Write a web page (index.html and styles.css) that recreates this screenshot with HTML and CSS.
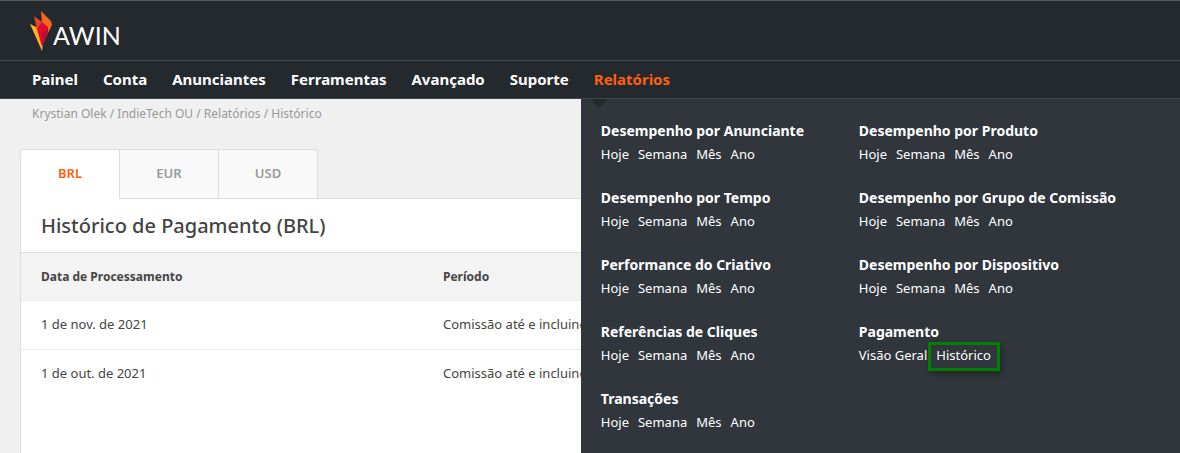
FILE: index.html
```html
<!DOCTYPE html>
<html lang="pt">
<head>
    <meta charset="UTF-8">
    <meta name="viewport" content="width=device-width, initial-scale=1.0">
    <title>Histórico de Pagamento</title>
    <link rel="stylesheet" href="styles.css">
</head>
<body>
    <header>
        <a href="#" class="logo">
            <svg width="23" height="41" viewBox="0 0 23 41" aria-hidden="true">
                <path fill="#f06a1d" d="M11 1 L21 11 L22 15 L16 27 L12 13 Z"/>
                <path fill="#fbb329" d="M0 14 L8 18 L13 34 L12 41 Z"/>
                <path fill="#e8412f" d="M4 6 L12 12 L13 21 L7 20 Z"/>
                <path fill="#e3082d" d="M12 12 L18 17 L18 22 L12 37 L7 19 Z"/>
                <path fill="#b80f32" d="M12 23 L18 20 L18 22 L13 34 Z"/>
            </svg>
            <span>AWIN</span>
        </a>
    </header>
    <nav>
        <ul class="menu">
            <li><a href="#">Painel</a></li>
            <li><a href="#">Conta</a></li>
            <li><a href="#">Anunciantes</a></li>
            <li><a href="#">Ferramentas</a></li>
            <li><a href="#">Avançado</a></li>
            <li><a href="#">Suporte</a></li>
            <li>
                <a href="#" class="active">Relatórios</a>
                <div class="dropdown">
                    <div class="group">
                        <h3>Desempenho por Anunciante</h3>
                        <p><a href="#">Hoje</a><a href="#">Semana</a><a href="#">Mês</a><a href="#">Ano</a></p>
                    </div>
                    <div class="group">
                        <h3>Desempenho por Produto</h3>
                        <p><a href="#">Hoje</a><a href="#">Semana</a><a href="#">Mês</a><a href="#">Ano</a></p>
                    </div>
                    <div class="group">
                        <h3>Desempenho por Tempo</h3>
                        <p><a href="#">Hoje</a><a href="#">Semana</a><a href="#">Mês</a><a href="#">Ano</a></p>
                    </div>
                    <div class="group">
                        <h3>Desempenho por Grupo de Comissão</h3>
                        <p><a href="#">Hoje</a><a href="#">Semana</a><a href="#">Mês</a><a href="#">Ano</a></p>
                    </div>
                    <div class="group">
                        <h3>Performance do Criativo</h3>
                        <p><a href="#">Hoje</a><a href="#">Semana</a><a href="#">Mês</a><a href="#">Ano</a></p>
                    </div>
                    <div class="group">
                        <h3>Desempenho por Dispositivo</h3>
                        <p><a href="#">Hoje</a><a href="#">Semana</a><a href="#">Mês</a><a href="#">Ano</a></p>
                    </div>
                    <div class="group">
                        <h3>Referências de Cliques</h3>
                        <p><a href="#">Hoje</a><a href="#">Semana</a><a href="#">Mês</a><a href="#">Ano</a></p>
                    </div>
                    <div class="group">
                        <h3>Pagamento</h3>
                        <p><a href="#">Visão Geral</a><a href="#" class="highlight">Histórico</a></p>
                    </div>
                    <div class="group">
                        <h3>Transações</h3>
                        <p><a href="#">Hoje</a><a href="#">Semana</a><a href="#">Mês</a><a href="#">Ano</a></p>
                    </div>
                </div>
            </li>
        </ul>
    </nav>
    <main>
        <div class="breadcrumb">
            <a href="#">Krystian Olek</a> / <a href="#">IndieTech OU</a> / <a href="#">Relatórios</a> / <a href="#">Histórico</a>
        </div>
        <div class="tabs">
            <button type="button" class="tab selected">BRL</button>
            <button type="button" class="tab">EUR</button>
            <button type="button" class="tab">USD</button>
        </div>
        <section class="panel">
            <h2>Histórico de Pagamento (BRL)</h2>
            <table>
                <thead>
                    <tr><th class="date">Data de Processamento</th><th>Período</th></tr>
                </thead>
                <tbody>
                    <tr><td>1 de nov. de 2021</td><td>Comissão até e incluindo</td></tr>
                    <tr><td>1 de out. de 2021</td><td>Comissão até e incluindo</td></tr>
                </tbody>
            </table>
        </section>
    </main>
</body>
</html>
```
FILE: styles.css
```css
* {
    box-sizing: border-box;
}
body {
    margin: 0;
    height: 100vh;
    display: flex;
    flex-direction: column;
    overflow: hidden;
    font-family: "Noto Sans", sans-serif;
    font-size: 13px;
    line-height: 18px;
    background-color: #f0f0f0;
    color: #444;
}
a {
    color: inherit;
    text-decoration: none;
}
header {
    padding: 9px 30px;
    background-color: #24292d;
    border-top: 1px solid #55595b;
    border-bottom: 1px solid #44474a;
}
.logo {
    display: flex;
    align-items: center;
    color: #fff;
    font-family: Lato, sans-serif;
    font-size: 25px;
    line-height: 41px;
}
.logo svg {
    display: block;
}
.logo span {
    padding-top: 10px;
    line-height: 31px;
}
nav {
    background-color: #24292d;
    border-bottom: 1px solid #44474a;
    color: #fff;
}
.menu {
    display: flex;
    gap: 25px;
    margin: 0;
    padding: 0 32px;
    list-style: none;
}
.menu li {
    position: relative;
    font-size: 15px;
    font-weight: 700;
    line-height: 37px;
}
.active {
    color: #ff5f0f;
}
.dropdown {
    position: absolute;
    top: 38px;
    left: -13px;
    width: 640px;
    padding: 22px 20px 0;
    display: grid;
    grid-template-columns: 238px 1fr;
    column-gap: 20px;
    background-color: #30363c;
    border-radius: 0 0 3px 3px;
    z-index: 1;
}
.dropdown::before {
    content: "";
    position: absolute;
    top: 0;
    left: 9px;
    border: 9px solid transparent;
    border-top-color: #24292d;
    border-bottom: 0;
}
.group {
    height: 67px;
}
.group h3 {
    margin: 0 0 4px;
    font-size: 14px;
    font-weight: 700;
    line-height: 20px;
    white-space: nowrap;
}
.group p {
    display: flex;
    gap: 9px;
    margin: 0;
    font-size: 13px;
    font-weight: 400;
    line-height: 18px;
}
.highlight {
    position: relative;
}
.highlight::after {
    content: "";
    position: absolute;
    inset: -4px -9px -7px -8px;
    border: 3px solid #008000;
    box-shadow: 2px 3px 6px rgba(0, 0, 0, 0.3);
}
main {
    flex: 1;
    display: flex;
    flex-direction: column;
    padding: 6px 20px 0;
}
.breadcrumb {
    padding: 0 12px;
    font-size: 12px;
    color: #999;
}
.tabs {
    display: flex;
    margin-top: 26px;
}
.tab {
    width: 99px;
    height: 49px;
    padding: 0 0 2px;
    border: 1px solid #ddd;
    border-width: 1px 0 0 1px;
    background-color: #f9f9f9;
    font-family: inherit;
    font-size: 13px;
    font-weight: 600;
    color: #999;
    cursor: pointer;
}
.tab:first-child {
    border-top-left-radius: 4px;
}
.tab:last-child {
    width: 100px;
    border-right-width: 1px;
    border-top-right-radius: 4px;
}
.tab.selected {
    height: 50px;
    margin-bottom: -1px;
    padding-bottom: 3px;
    background-color: #fff;
    color: #ff5f0f;
    z-index: 1;
}
.panel {
    flex: 1;
    border: 1px solid #ddd;
    border-bottom: 0;
    background-color: #fff;
}
.panel h2 {
    margin: 0;
    padding: 0 20px;
    font-size: 20px;
    font-weight: 500;
    line-height: 53px;
}
table {
    width: 100%;
    border-collapse: collapse;
}
th,
td {
    height: 49px;
    padding: 0 20px 2px;
    text-align: left;
}
th {
    height: 48px;
    padding-bottom: 0;
    background-color: #f3f3f3;
    border-top: 1px solid #ddd;
    font-size: 12px;
    font-weight: 700;
}
td {
    border-top: 1px solid #eaeaea;
}
.date {
    width: 402px;
}
```
